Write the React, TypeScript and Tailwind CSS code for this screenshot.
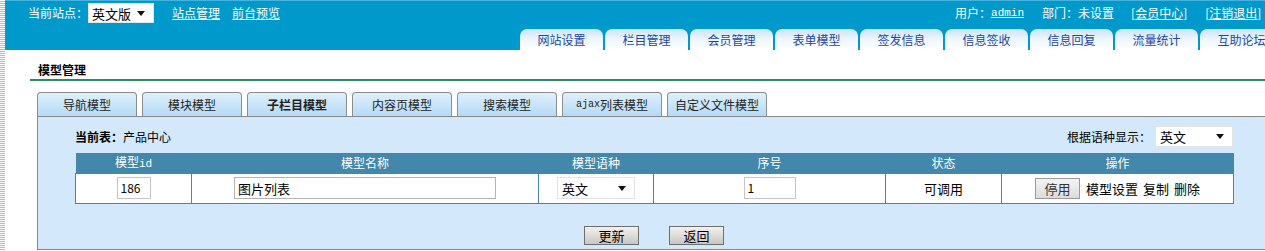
import React from 'react';

function Caret() {
  return (
    <svg width="8" height="5" viewBox="0 0 8 5" className="shrink-0">
      <path d="M0 0 L8 0 L4 5 Z" fill="#111" />
    </svg>
  );
}

function FakeSelect({ text, w, h, pl = 4 }: { text: string; w: string; h: string; pl?: number }) {
  return (
    <div className={`${w} ${h} flex items-center justify-between bg-white border border-[#e4e4e4] pr-[8px]`} style={{ paddingLeft: pl }}>
      <span className="text-[13px] text-black">{text}</span>
      <Caret />
    </div>
  );
}

export default function App() {
  const topTabs = ['网站设置', '栏目管理', '会员管理', '表单模型', '签发信息', '信息签收', '信息回复', '流量统计', '互助论坛'];
  const subTabs = ['导航模型', '模块模型', '子栏目模型', '内容页模型', '搜索模型', 'ajax列表模型', '自定义文件模型'];
  return (
    <div className="flex w-[1265px] h-[251px] overflow-hidden bg-white text-[12px] leading-none font-['Noto_Sans_CJK_SC',sans-serif] text-black whitespace-nowrap">
      <div className="w-[5px] shrink-0 bg-[repeating-linear-gradient(to_bottom,#ffffff_0px,#ffffff_1px,#8cc6ec_1px,#8cc6ec_2px)]" />
      <div className="flex-1 min-w-0 flex flex-col">
        {/* header */}
        <div className="h-[50px] shrink-0 bg-[#0099cc] border-t border-[#45b3de] flex flex-col">
          <div className="h-[24px] flex items-center text-white">
            <span className="ml-[23px] w-[60px]">当前站点：</span>
            <FakeSelect text="英文版" w="w-[66px]" h="h-[20px]" pl={3} />
            <a className="ml-[18px] underline">站点管理</a>
            <a className="ml-[12px] underline">前台预览</a>
            <span className="ml-[675px]">用户：</span>
            <a className="underline font-['Liberation_Mono',monospace] text-[11px]">admin</a>
            <span className="ml-[18px]">部门：未设置</span>
            <span className="ml-[17px]">[<a className="underline">会员中心</a>]</span>
            <span className="ml-[18px]">[<a className="underline">注销退出</a>]</span>
          </div>
          <div className="flex-1 flex items-end pl-[515px]">
            {topTabs.map((t) => (
              <div
                key={t}
                className="w-[83px] h-[21px] mr-[2px] shrink-0 rounded-t-[7px] bg-gradient-to-b from-[#c9e4f6] via-[#eef7fd] to-white flex items-center justify-center text-[#1d45a6] text-[12px]"
              >
                {t}
              </div>
            ))}
          </div>
        </div>

        {/* content */}
        <div className="flex-1 flex flex-col pl-[25px]">
          <div className="h-[29px] flex items-end pb-[3px] pl-[8px] font-bold text-[12px]">模型管理</div>
          <div className="h-[2px] bg-[#2a8a62]" />
          <div className="mt-[11px] ml-[7px] flex gap-[5px]">
            {subTabs.map((t, i) => (
              <div
                key={t}
                className={`w-[100px] h-[24px] shrink-0 border border-b-0 border-[#8d8d8d] rounded-t-[4px] bg-gradient-to-b from-[#dff0fc] to-[#b5daf6] flex items-center justify-center text-[#222] ${i === 2 ? 'font-bold' : ''}`}
              >
                {t === 'ajax列表模型' ? (
                  <>
                    <span className="font-['Liberation_Mono',monospace] text-[10px]">ajax</span>
                    <span>列表模型</span>
                  </>
                ) : (
                  t
                )}
              </div>
            ))}
          </div>
          <div className="ml-[7px] h-[134px] border border-r-0 border-[#888] bg-[#d3e9fb] pl-[37px] pt-[9px]">
            <div className="w-[1158px]">
              <div className="h-[21px] flex items-center justify-between">
                <div>
                  <span className="font-bold">当前表：</span>
                  <span>产品中心</span>
                </div>
                <div className="flex items-center">
                  <span className="mr-[4px]">根据语种显示：</span>
                  <FakeSelect text="英文" w="w-[78px]" h="h-[21px]" />
                </div>
              </div>
              <table className="mt-[6px] w-[1158px] border-collapse table-fixed">
                <colgroup>
                  <col className="w-[116px]" />
                  <col className="w-[347px]" />
                  <col className="w-[115px]" />
                  <col className="w-[232px]" />
                  <col className="w-[116px]" />
                  <col className="w-[232px]" />
                </colgroup>
                <thead>
                  <tr className="h-[20px] bg-[#4387aa] text-white">
                    <th className="font-normal p-0">
                      模型<span className="font-['Liberation_Mono',monospace] text-[11px]">id</span>
                    </th>
                    <th className="font-normal p-0">模型名称</th>
                    <th className="font-normal p-0">模型语种</th>
                    <th className="font-normal p-0">序号</th>
                    <th className="font-normal p-0">状态</th>
                    <th className="font-normal p-0">操作</th>
                  </tr>
                </thead>
                <tbody>
                  <tr className="h-[30px] bg-white">
                    <td className="border border-[#4a86a8] p-0">
                      <div className="mx-auto w-[34px] h-[22px] border border-[#c4c4c4] flex items-center pl-[3px] text-[12px]">186</div>
                    </td>
                    <td className="border border-[#4a86a8] p-0">
                      <div className="mx-auto w-[262px] h-[22px] border border-[#b4b4b4] flex items-center pl-[3px] text-[13px]">图片列表</div>
                    </td>
                    <td className="border border-[#4a86a8] p-0">
                      <div className="mx-auto w-fit">
                        <FakeSelect text="英文" w="w-[78px]" h="h-[22px]" />
                      </div>
                    </td>
                    <td className="border border-[#4a86a8] p-0">
                      <div className="mx-auto w-[52px] h-[22px] border border-[#c4c4c4] flex items-center pl-[3px]">1</div>
                    </td>
                    <td className="border border-[#4a86a8] p-0 text-center text-[13px]">可调用</td>
                    <td className="border border-[#4a86a8] p-0">
                      <div className="flex items-center justify-center">
                        <div className="w-[45px] h-[21px] border border-[#9a9a9a] bg-gradient-to-b from-[#f4f4f4] to-[#dcdcdc] flex items-center justify-center text-[#333] text-[13px]">停用</div>
                        <span className="ml-[6px] text-[13px]">模型设置</span>
                        <span className="ml-[5px] text-[13px]">复制</span>
                        <span className="ml-[5px] text-[13px]">删除</span>
                      </div>
                    </td>
                  </tr>
                </tbody>
              </table>
              <div className="mt-[22px] flex justify-center gap-[30px]">
                <div className="w-[55px] h-[19px] border border-[#6e6e6e] bg-gradient-to-b from-[#f3f1ee] to-[#c9c7c3] flex items-center justify-center text-[13px]">更新</div>
                <div className="w-[55px] h-[19px] border border-[#6e6e6e] bg-gradient-to-b from-[#f3f1ee] to-[#c9c7c3] flex items-center justify-center text-[13px]">返回</div>
              </div>
            </div>
          </div>
        </div>
      </div>
    </div>
  );
}
